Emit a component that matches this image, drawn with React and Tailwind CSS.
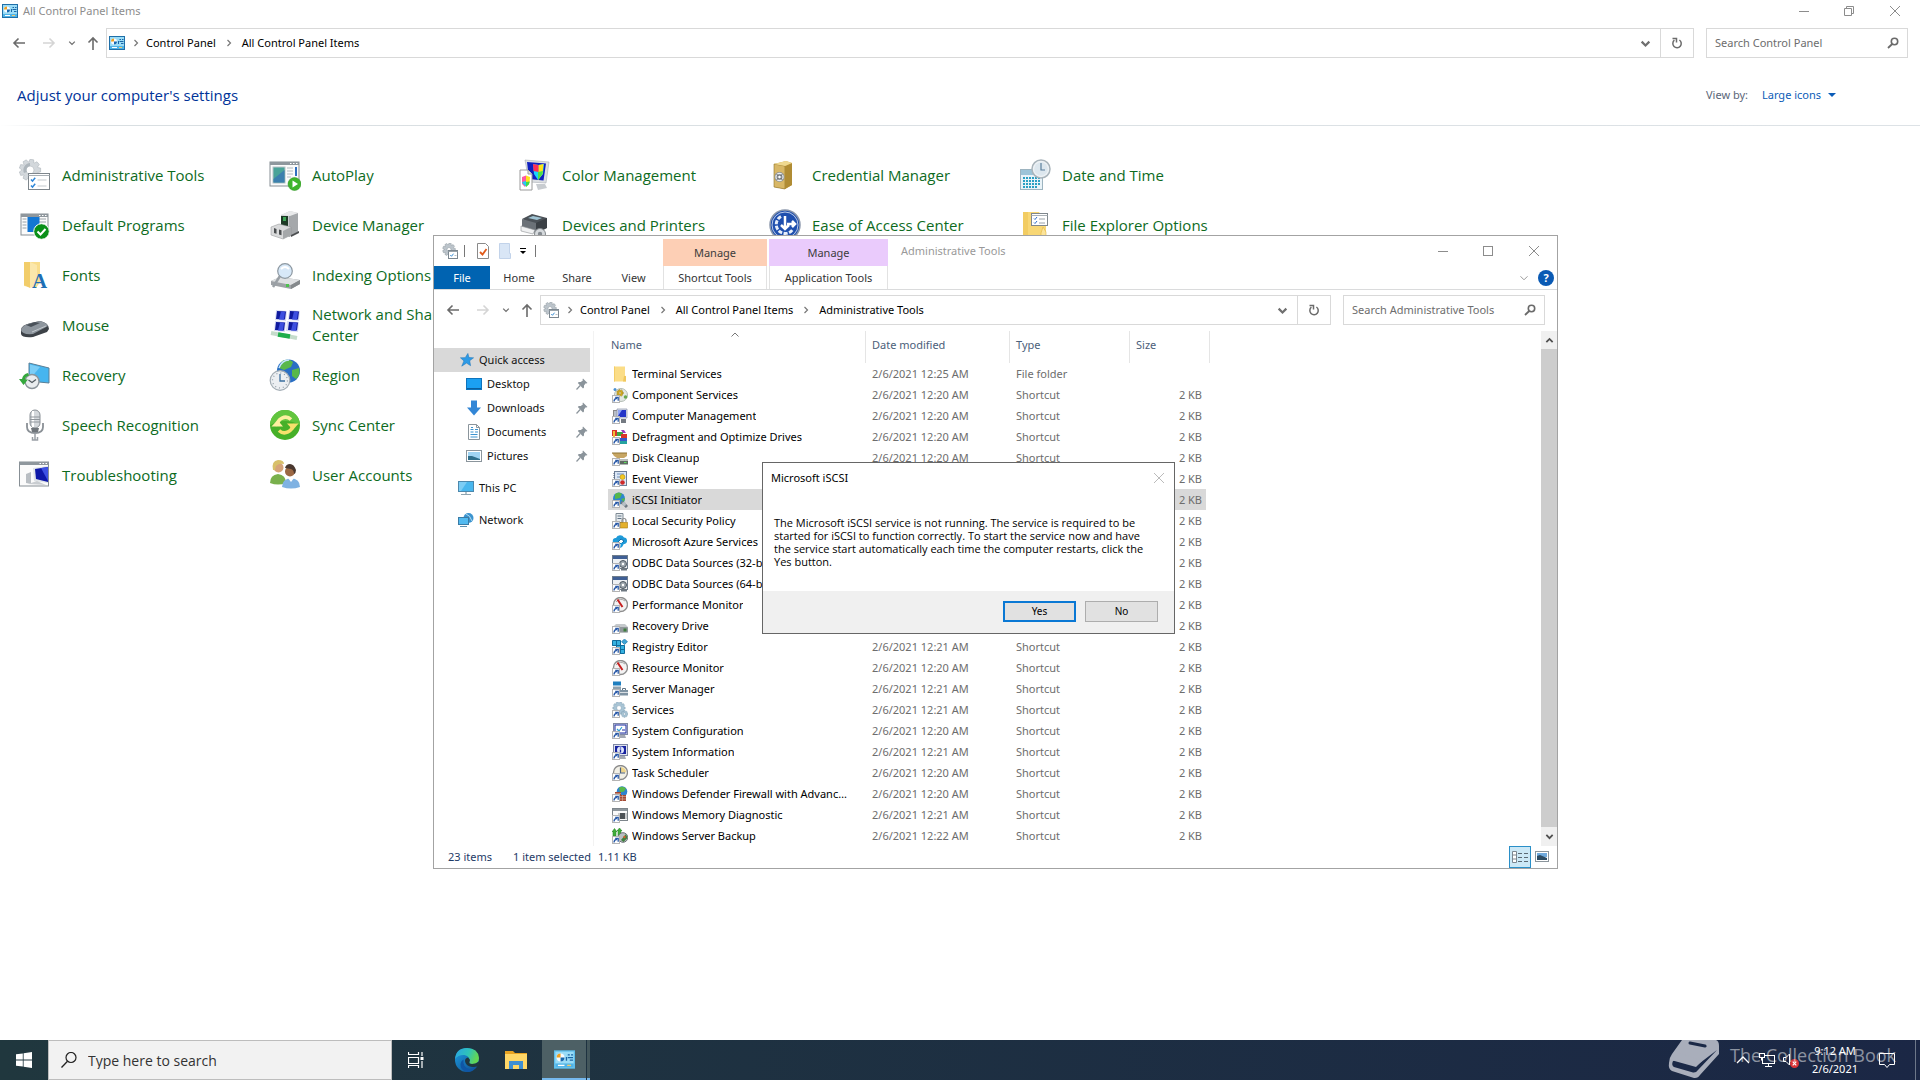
import React from "react";

const P = (props) => <path {...props} />;

/* ---------- shared 16px glyphs ---------- */

function Svg({ s = 16, box = 16, children, label }) {
  return (
    <svg width={s} height={s} viewBox={`0 0 ${box} ${box}`} className="shrink-0" aria-hidden={label ? undefined : true} aria-label={label}>
      {children}
    </svg>
  );
}

function gearPath(cx, cy, r, R, n) {
  const pts = [];
  for (let i = 0; i < n; i++) {
    const a = (i / n) * Math.PI * 2;
    const w = Math.PI / n;
    [[r, -w * 0.95], [R, -w * 0.5], [R, w * 0.5], [r, w * 0.95]].forEach(([q, d]) => {
      pts.push(`${(cx + q * Math.cos(a + d)).toFixed(2)} ${(cy + q * Math.sin(a + d)).toFixed(2)}`);
    });
  }
  return "M" + pts.join("L") + "Z";
}

function Gear({ cx, cy, r, R, n = 8, hole, fill = "#bcc4cb", stroke = "#8e989f" }) {
  return (
    <g>
      <P d={gearPath(cx, cy, r, R, n)} fill={fill} stroke={stroke} strokeWidth="0.5" />
      <circle cx={cx} cy={cy} r={hole} fill="#fff" stroke={stroke} strokeWidth="0.5" />
    </g>
  );
}

function PanelIcon({ s = 16, edge = "#1f6fa8" }) {
  return (
    <Svg s={s}>
      <rect x="0.5" y="1.5" width="15" height="13" fill="#9adcf7" stroke={edge} />
      <rect x="1" y="11" width="14" height="3" fill="#4fb3e6" />
      <circle cx="5" cy="6.5" r="3" fill="#f6fbff" />
      <P d="M5 6.5V3.5A3 3 0 0 0 2 6.5Z" fill="#f0a020" />
      <P d="M5 6.5H8A3 3 0 0 1 5 9.5Z" fill="#1769b0" />
      <P d="M10.500 4.500h1.500M13 4.500h1.500M10.500 6.500h4M12 8.500h2.500M9.500 6v3" stroke="#1a66a6" strokeWidth="1" fill="none" />
      <P d="M3 12.500h5" stroke="#fff" />
      <P d="M10 12.500h3" stroke="#f5c96a" />
    </Svg>
  );
}

function AdminIcon() {
  return (
    <Svg>
      <Gear cx={7} cy={6.5} r={4.6} R={6.4} n={9} hole={2} />
      <rect x="6.500" y="7.500" width="9" height="8" fill="#fff" stroke="#7c8790" />
      <P d="M6.500 8.500h9" stroke="#9aa4ab" />
      <P d="M8.300 12l1.200 1.300 2-2.600" fill="none" stroke="#3a8fd6" />
      <P d="M12.500 12.500h2" stroke="#b9c1c7" />
    </Svg>
  );
}

const Back = ({ c = "#6b6b6b" }) => (
  <Svg><P d="M14 8H3M7.500 3.500L3 8l4.500 4.500" fill="none" stroke={c} strokeWidth="1.6" /></Svg>
);
const Forward = () => (
  <Svg><P d="M2 8h11M8.500 3.500L13 8l-4.500 4.500" fill="none" stroke="#d5d5d5" strokeWidth="1.6" /></Svg>
);
const Up = () => (
  <Svg><P d="M8 15V3M3.500 7.500L8 3l4.500 4.500" fill="none" stroke="#6b6b6b" strokeWidth="1.6" /></Svg>
);
const ChevDown = ({ s = 10, c = "#6f6f6f", w = 1.6 }) => (
  <Svg s={s} box={10}><P d="M1.500 3.300L5 6.800l3.500-3.500" fill="none" stroke={c} strokeWidth={w} /></Svg>
);
const ChevRight = () => (
  <Svg s={8} box={8}><P d="M2.500 1L5.500 4 2.500 7" fill="none" stroke="#777" strokeWidth="1.200" /></Svg>
);
const Refresh = () => (
  <Svg s={12} box={12}>
    <P d="M3.400 3.200A4.200 4.200 0 1 0 8.400 3" fill="none" stroke="#6b6b6b" strokeWidth="1.500" />
    <P d="M1.500 1.500H5.500V5.500" fill="none" stroke="#6b6b6b" strokeWidth="1.500" />
  </Svg>
);
const Magnifier = () => (
  <Svg s={12} box={12}>
    <circle cx="7.500" cy="4.500" r="3.200" fill="none" stroke="#6a6a6a" strokeWidth="1.600" />
    <P d="M5.200 7L1 11" stroke="#6a6a6a" strokeWidth="1.800" />
  </Svg>
);
const MinGlyph = () => (
  <Svg s={10} box={10}><P d="M0 5.500h10" stroke="#8c8c8c" /></Svg>
);
const MaxGlyph = () => (
  <Svg s={10} box={10}><rect x="0.500" y="0.500" width="9" height="9" fill="none" stroke="#8c8c8c" /></Svg>
);
const RestoreGlyph = () => (
  <Svg s={10} box={10}><P d="M0.500 2.500h7v7h-7zM2.500 2.500v-2h7v7h-2" fill="none" stroke="#8c8c8c" /></Svg>
);
const CloseGlyph = ({ c = "#8c8c8c" }) => (
  <Svg s={10} box={10}><P d="M0 0L10 10M10 0L0 10" stroke={c} strokeWidth="1" /></Svg>
);

/* ---------- large control panel icons ---------- */

const L = ({ children }) => <Svg s={32} box={32}>{children}</Svg>;

const WindowFrame = ({ x = 1, y = 3, w = 29, h = 24 }) => (
  <g>
    <rect x={x} y={y} width={w} height={h} fill="#fbfbfb" stroke="#878f95" />
    <rect x={x} y={y} width={w} height="3" fill="#8f979d" />
    <P d={`M${x + w - 9} ${y + 1.5}h1.500m1.500 0h1.500m1.500 0h1.500`} stroke="#fff" />
  </g>
);

const big = {
  admin: (
    <L>
      <Gear cx={11} cy={11} r={8} R={10.8} n={9} hole={4} fill="#d3d8dc" stroke="#a4adb3" />
      <P d="M11 4a7 7 0 0 0-6 10l3-1a4 4 0 0 1 3-6z" fill="#aeb6bc" />
      <rect x="9.500" y="14.500" width="21" height="16" fill="#fff" stroke="#7e868c" />
      <P d="M9.500 16.500h21" stroke="#a9b0b5" />
      <P d="M12 20.500l1.500 1.600 2.700-3.400M12 26.500l1.500 1.600 2.700-3.400" fill="none" stroke="#2f87d8" strokeWidth="1.500" />
      <P d="M18.500 21h9M18.500 27h9" stroke="#c3c9cd" />
    </L>
  ),
  autoplay: (
    <L>
      <WindowFrame x={1} y={3} w={29} h={24} />
      <rect x="4" y="8" width="12" height="16" fill="#4aa398" stroke="#b8c2c8" />
      <P d="M4.500 20l11-9v12.500h-11z" fill="#3c7fae" />
      <P d="M18 9h6M18 12h6M18 15h6M18 18h4" stroke="#b3babf" />
      <rect x="26" y="8" width="2" height="9" fill="#316fc0" />
      <circle cx="25.500" cy="25" r="6.500" fill="#3fb52c" stroke="#2b8f1e" strokeWidth="0.500" />
      <P d="M23.500 21.500l5.500 3.500-5.500 3.500z" fill="#fff" />
    </L>
  ),
  color: (
    <L>
      <P d="M6 1l24 2-3 21-17-1z" fill="#dcdfe2" stroke="#a9afb5" strokeWidth="0.600" />
      <P d="M8 3l19 1.500-2.500 17L10 20z" fill="#0f1fbf" />
      <P d="M14 5l6 1 5-1-1 10-5 6-4-6z" fill="#19d3ff" />
      <P d="M19.500 6l5-1-1 10-4.500 6z" fill="#ffe21a" />
      <P d="M14 5l5.500 1v7l-5-1z" fill="#ff2d55" />
      <P d="M19 13l5-1-.5 3-4.500 6z" fill="#4be04b" />
      <P d="M17 25h9l2 4-9 2z" fill="#c8ccd0" />
      <P d="M1 11h8l4 4v16H1z" fill="#fff" stroke="#9a9a9a" />
      <P d="M9 11v4h4" fill="#e6e6e6" stroke="#9a9a9a" />
      <P d="M3 18l4-1.500v9.500l-1 2-3-3z" fill="#ff5aa0" />
      <P d="M7 16.500l4 1.500-.5 6-3.500 4z" fill="#ffe21a" />
      <P d="M3 23l4-1v5.500l-3-2.500z" fill="#28c8f0" />
      <P d="M7 23l3.800-.5-1 3-2.800 2.500z" fill="#3cdc50" />
    </L>
  ),
  credential: (
    <L>
      <P d="M5 5l12-3 6 2v22l-7 4-11-2z" fill="#caa54a" />
      <P d="M5 5l11 2v23L5 28z" fill="#d8b766" stroke="#8f7226" strokeWidth="0.600" />
      <P d="M16 7l7-3v22l-7 4z" fill="#b08c34" />
      <P d="M5 5l12-3 6 2-7 3z" fill="#efd991" />
      <circle cx="10.500" cy="18" r="5" fill="#8a8f93" />
      <circle cx="10.500" cy="18" r="3.600" fill="none" stroke="#eceff1" strokeWidth="1.200" />
      <P d="M7.500 15l6 6M13.500 15l-6 6" stroke="#54585b" strokeWidth="0.800" />
      <circle cx="10.500" cy="18" r="1.300" fill="#fff" />
    </L>
  ),
  date: (
    <L>
      <rect x="1.500" y="10.500" width="22" height="20" fill="#e9f3f8" stroke="#9db4c0" />
      <rect x="2" y="11" width="21" height="5" fill="#9cc4d8" />
      <P d="M4 19h17M4 22h17M4 25h17M4 28h14" stroke="#2aa0c4" strokeWidth="2" strokeDasharray="2 1" />
      <circle cx="22" cy="10" r="9" fill="#eef2f5" stroke="#a9b4bb" strokeWidth="1.500" />
      <circle cx="22" cy="10" r="6.800" fill="#dde7ee" />
      <P d="M22 4v7h4" fill="none" stroke="#5a7f9c" strokeWidth="1.200" />
    </L>
  ),
  defaults: (
    <L>
      <WindowFrame x={2} y={5} w={27} h={21} />
      <P d="M3.500 10h4M3.500 13h4M3.500 16h4M3.500 19h4M20 10h7M20 13h7" stroke="#9aa2a8" />
      <rect x="8.500" y="8" width="12" height="15" fill="#1477d4" />
      <circle cx="22.500" cy="22.500" r="7.800" fill="#0a8f18" stroke="#fff" />
      <P d="M18.500 22.500l3 3 5-5.500" fill="none" stroke="#fff" strokeWidth="2" />
    </L>
  ),
  device: (
    <L>
      <P d="M12 6l9-4 8 2v19l-9 5-8-3z" fill="#c9cbcd" />
      <P d="M20 6l9-2v19l-9 5z" fill="#a5a8ab" />
      <P d="M12 6l9-4 8 2-8 3z" fill="#e9eaeb" />
      <rect x="12" y="7" width="7" height="10" fill="#1d3a26" />
      <rect x="14" y="8" width="3" height="4" fill="#3fa556" />
      <P d="M2 18l8-3 12 3v8l-8 4-12-4z" fill="#d9dadb" stroke="#8c8f91" strokeWidth="0.500" />
      <P d="M14 22l8-4v8l-8 4z" fill="#a5a8aa" />
      <P d="M5 19v5l2.500.8V20zM10 20.500v5l2.500.8v-5z" fill="#4b4e50" />
      <P d="M22 26l8-4v2l-8 4z" fill="#4b4e50" />
    </L>
  ),
  printer: (
    <L>
      <P d="M3 10l10-5 15 4v3l-11 5z" fill="#4b5157" />
      <P d="M9 9l5-2 9 2-5 2z" fill="#9fc3d3" />
      <P d="M3 10l14 4v10L3 20z" fill="#6b7177" />
      <P d="M17 14l11-5v10l-11 6z" fill="#3b4045" />
      <P d="M2 17l14 4-2 4-12-3z" fill="#f0f1f2" stroke="#8b8f92" strokeWidth="0.600" />
      <circle cx="21" cy="25" r="5.500" fill="#d5d9dc" stroke="#84898d" />
      <circle cx="21" cy="25" r="2.200" fill="#868c91" />
    </L>
  ),
  ease: (
    <L>
      <circle cx="16" cy="16" r="15" fill="#1f4fae" stroke="#8b97ab" strokeWidth="1.500" />
      <circle cx="16" cy="16" r="13" fill="none" stroke="#dfe8f6" strokeWidth="0.800" />
      <P d="M16 7v12M12 16l4 4 4-4M18 15h8M23 12l3 3-3 3" fill="none" stroke="#fff" strokeWidth="2.500" />
      <P d="M12 7.500A9 9 0 1 0 24 20" fill="none" stroke="#e8effa" strokeWidth="3" strokeDasharray="4 1.500" />
    </L>
  ),
  folderopts: (
    <L>
      <P d="M4 3h16l2 3h5v26H4z" fill="#f8d775" />
      <P d="M4 3h5v29H4z" fill="#f2cc62" />
      <P d="M22 24l2-6 3 5v10h-5z" fill="#fce49a" stroke="#e0b544" strokeWidth="0.600" />
      <rect x="12.500" y="4.500" width="16" height="12" fill="#fff" stroke="#7f878d" />
      <P d="M12.500 6.500h16" stroke="#a9b0b5" />
      <P d="M15 9.500l1 1 2-2.500M15 13.500l1 1 2-2.500" fill="none" stroke="#2f6fc8" />
      <P d="M20 10h6M20 14h6" stroke="#9aa2a8" />
    </L>
  ),
  fonts: (
    <L>
      <P d="M5 3h16v20l-4 6-12-2z" fill="#f9dd8c" />
      <P d="M5 3h6v26l-6-3z" fill="#f2cd6a" />
      <P d="M11 3l7 3v20l-7 3z" fill="#fbe7ab" />
      <text x="13" y="29" fontFamily="Liberation Serif, serif" fontSize="21" fontWeight="700" fill="#1f6fb5">A</text>
    </L>
  ),
  indexing: (
    <L>
      <P d="M2 22l9-4 20 3v4l-9 5-20-4z" fill="#9ea2a6" />
      <P d="M2 22l9-4 20 3-9 5z" fill="#dfe1e3" />
      <P d="M22 26l9-5v4l-9 5z" fill="#85898c" />
      <rect x="17" y="25" width="3" height="3" fill="#4ec24e" />
      <P d="M11 17l-7 11" stroke="#9aa0a5" strokeWidth="2.500" />
      <circle cx="16" cy="12" r="7.300" fill="#d7e8f8" stroke="#8d98a1" strokeWidth="1.200" />
      <P d="M12 10q4-4 8 0" fill="none" stroke="#fff" strokeWidth="2" />
    </L>
  ),
  mouse: (
    <L>
      <P d="M2 21q0-5 10-7l9-2q9 2 9 8l-2 3-14 5Q3 29 2 25z" fill="#3d4248" />
      <P d="M2 21q1-5 10-7l9-2q7 2 8 5l-15 8Q3 26 2 21z" fill="#8e969e" />
      <P d="M7 16l9-3 5 1-9 4z" fill="#4b525a" />
      <P d="M13 23l14-6" stroke="#c3c9ce" />
    </L>
  ),
  network: (
    <L>
      <P d="M7 1l11 1-1 10-11-1zM20 1l11 1-1 10-11-1zM6 12l11 1-1 10-11-1zM18 12l12 1-1 10-12-1z" fill="#d8dcf4" />
      <P d="M8 2l9 .5-1 8-9-.5zM21 2l9 .5-1 8-9-.5zM7 13l9 .5-1 8-9-.5zM20 13l9 .5-1 8-9-.5z" fill="#0f1a9e" />
      <P d="M12 2.500l4 .2-1 8-5-.3zM25 2.500l4 .2-1 8-5-.3zM11 13.500l4 .2-1 8-5-.3zM24 13.500l4 .2-1 8-5-.3z" fill="#3d4fe0" />
      <P d="M2 24l26 5" stroke="#c5dccb" strokeWidth="4" />
      <P d="M9 25.500l12 2" stroke="#1fae4b" strokeWidth="4.500" />
    </L>
  ),
  recovery: (
    <L>
      <P d="M10 4l20 5v15l-20-2z" fill="#46b5ef" stroke="#5a7f96" />
      <P d="M11 5.500l10 2.500-10 12z" fill="#7bcdf6" />
      <circle cx="13" cy="22.500" r="7" fill="#e9ecee" stroke="#8b949a" strokeWidth="1.500" />
      <P d="M9.500 21l3.500 2.500 4-3" fill="none" stroke="#50585e" strokeWidth="1.200" />
      <P d="M9 14q-5 1-6 6H0l4.500 6L9 20.500H6q0-3 4-4z" fill="#34a83c" />
    </L>
  ),
  region: (
    <L>
      <circle cx="19.500" cy="12" r="11.500" fill="#2a6fc4" />
      <P d="M13 2q7-3 11 1l-2 5-7 3-5-2zM23 11l7-2q2 7-3 11l-4-3z" fill="#58b84a" />
      <P d="M10 9q3-8 10-8" stroke="#c5e4ff" strokeWidth="1.500" fill="none" />
      <circle cx="11" cy="21.500" r="9.800" fill="#eceff2" stroke="#a3adb4" strokeWidth="1.200" />
      <circle cx="11" cy="21.500" r="7.500" fill="none" stroke="#8b98a2" strokeWidth="1.200" strokeDasharray="1 2.930" />
      <P d="M11 15v7h5" fill="none" stroke="#3a6f9f" strokeWidth="1.300" />
    </L>
  ),
  mic: (
    <L>
      <rect x="11" y="1" width="10" height="18" rx="5" fill="#d4d8dc" stroke="#8a9096" />
      <P d="M14 2v16" stroke="#fff" strokeWidth="2" />
      <P d="M11 8h10M11 10.500h10M11 13h10" stroke="#90969c" />
      <P d="M8 14v4q0 6 8 6t8-6v-4" fill="none" stroke="#8a9096" strokeWidth="1.800" />
      <P d="M16 24v7M13.500 28v3h5v-3" stroke="#9aa0a6" strokeWidth="1.500" fill="none" />
      <P d="M12 19h8l-1 4h-6z" fill="#6f757b" />
    </L>
  ),
  sync: (
    <L>
      <circle cx="16" cy="16" r="15" fill="#46b028" />
      <P d="M1 16a15 15 0 0 1 30 0q-15-8-30 0z" fill="#62c53e" />
      <P d="M8.500 17A8 8 0 0 1 22 10.500" fill="none" stroke="#fdf0a0" strokeWidth="3.500" />
      <P d="M23.500 15A8 8 0 0 1 10 21.500" fill="none" stroke="#f6e06c" strokeWidth="3.500" />
      <P d="M18 14.500h11.500L24 21z" fill="#f6e06c" />
      <P d="M2.500 17.500H14L8.500 11z" fill="#fdf0a0" />
    </L>
  ),
  trouble: (
    <L>
      <WindowFrame x={0.5} y={3} w={29} h={24} />
      <P d="M7 15l5-2v12l-5-1z" fill="#b9bec3" />
      <P d="M14 9l15-2v17l-14-2z" fill="#dfe3e8" />
      <P d="M16 10l13-2v15l-12-3z" fill="#0e18a8" />
      <P d="M22 9l7-1v14z" fill="#3e52e4" />
      <P d="M9 25l9-3 9 4z" fill="#c9cdd1" />
    </L>
  ),
  users: (
    <L>
      <P d="M1 24q0-8 8-9 8 1 8 9-8 3-16 0z" fill="#79b04c" />
      <circle cx="9.500" cy="8.500" r="5" fill="#d6a379" />
      <P d="M4 11Q2 2 9 1q6 0 6 4-5-1-8 2l-1 4z" fill="#d8c06a" />
      <P d="M13 28q0-8 9-9 9 1 9 9-9 3-18 0z" fill="#7fb2e2" />
      <P d="M19 19l3 4 3-4z" fill="#fff" />
      <circle cx="21" cy="12.500" r="5" fill="#9c6844" />
      <P d="M16 9q1-4 5-4t6 6q0 3-2 4 0-4-3-5z" fill="#4a382f" />
    </L>
  ),
};

/* ---------- small shortcut icons ---------- */

const Cut = ({ children }) => (
  <Svg>
    {children}
    <rect x="0.500" y="8.500" width="7" height="7" fill="#fff" stroke="#b4b4b4" />
    <P d="M2 14.500q0-3 3-3.200M3.200 10.500h3v3.200" fill="none" stroke="#2a5aa8" strokeWidth="1.300" />
  </Svg>
);

const Monitor = ({ fill = "#1723a0" }) => (
  <g>
    <rect x="1.500" y="0.500" width="14" height="11" fill="#dfe3ee" stroke="#7f88a6" />
    <rect x="3" y="2" width="11" height="8" fill={fill} />
    <P d="M8 12h5l1 3H8z" fill="#a3a9b3" />
  </g>
);
const Dial = () => (
  <g>
    <circle cx="8.500" cy="7.500" r="7" fill="#f3f3f3" stroke="#8f8f8f" strokeWidth="1.400" />
    <P d="M4 5a6 6 0 0 1 9-1" stroke="#a8a8a8" fill="none" />
    <P d="M5.500 2.500l5 7.500" stroke="#c62020" strokeWidth="2" />
  </g>
);
const Odbc = () => (
  <g>
    <rect x="0.500" y="0.500" width="15" height="13" fill="#eef1f4" stroke="#6f7d8c" />
    <rect x="1" y="1" width="14" height="3" fill="#3f5f95" />
    <circle cx="11" cy="9" r="3.500" fill="#9aa4ac" stroke="#4c5660" />
    <circle cx="11" cy="9" r="1.200" fill="#fff" />
    <P d="M9 13h6v2.500H9z" fill="#6d7780" />
  </g>
);

const small = {
  folder: (
    <Svg>
      <P d="M2 0.500h11v9l1 1v5H2z" fill="#fbdd87" />
      <P d="M12 10h2v5.500h-3z" fill="#f0c75e" />
      <P d="M2 0.500h1v15H2z" fill="#f3cd68" />
    </Svg>
  ),
  component: (
    <Cut>
      <circle cx="9" cy="8" r="6.500" fill="#e3e8e4" stroke="#b4bdb6" />
      <Gear cx={8} cy={6} r={2.2} R={3.4} n={7} hole={1} fill="#d9b020" stroke="#8f7310" />
      <circle cx="3" cy="2.500" r="1.500" fill="#4a8fd0" />
      <circle cx="13.500" cy="10" r="1.800" fill="#6aa84f" />
    </Cut>
  ),
  computer: (
    <Cut>
      <rect x="1.500" y="2.500" width="6" height="8" fill="#b8bec8" stroke="#888" />
      <P d="M5 1h10v9H5z" fill="#dfe3ee" stroke="#8790a8" strokeWidth="0.700" />
      <P d="M6 2h8v7H6z" fill="#2436c8" />
      <P d="M6 2h4l-4 6z" fill="#8fa4f4" />
      <rect x="9" y="11" width="5" height="4" fill="#747a82" />
    </Cut>
  ),
  defrag: (
    <Cut>
      <rect x="0" y="1" width="5" height="6" fill="#d8352a" />
      <rect x="1" y="2" width="2" height="6" fill="#efc03a" />
      <rect x="5" y="3" width="6" height="4" fill="#3aa845" />
      <P d="M9 1h3l2 3h-3z" fill="#9a3bc0" />
      <rect x="9" y="5" width="6" height="4" fill="#d8352a" />
      <rect x="8" y="9" width="7" height="3" fill="#3558c8" />
      <rect x="8" y="12" width="7" height="3" fill="#26a3a0" />
    </Cut>
  ),
  cleanup: (
    <Cut>
      <P d="M0 3h15v3l-3 2H5L2 6z" fill="#c7a663" />
      <P d="M0 3h15" stroke="#8f7436" />
      <rect x="6" y="9" width="10" height="5.500" fill="#5f6a62" />
      <rect x="6" y="9" width="10" height="2" fill="#b9beb9" />
      <rect x="12" y="12" width="2.500" height="1" fill="#5ee05e" />
    </Cut>
  ),
  event: (
    <Cut>
      <rect x="2.500" y="0.500" width="12" height="14" fill="#dce8f6" stroke="#6d7f98" />
      <P d="M5 3h7M5 6h3" stroke="#6f8fc0" />
      <circle cx="10.500" cy="6" r="2.500" fill="#f4c820" stroke="#a88508" strokeWidth="0.500" />
      <circle cx="10.500" cy="11.500" r="2.300" fill="#cf2a2a" />
      <P d="M2 2v12" stroke="#50607a" strokeDasharray="1 1" />
    </Cut>
  ),
  iscsi: (
    <Cut>
      <circle cx="7" cy="6.500" r="6" fill="#2d86cf" />
      <P d="M3 2q4-3 7 0l-2 4-5 1zM9 7l4-1-1 4z" fill="#56b64a" />
      <P d="M9 10l3 2 3 3" stroke="#6f7982" strokeWidth="3" fill="none" />
      <circle cx="12" cy="12" r="2" fill="#b8c0c6" />
    </Cut>
  ),
  security: (
    <Cut>
      <P d="M4 0.500h7v9H4z" fill="#e7ebee" stroke="#7f8b95" />
      <P d="M5.500 3h4M5.500 5.500h4" stroke="#5f7487" />
      <P d="M10 9.500V7.500a2 2 0 0 1 4 0v2" fill="none" stroke="#8a8a8a" strokeWidth="1.200" />
      <rect x="8.500" y="9.500" width="7" height="5.500" fill="#e3b02c" stroke="#a87d10" strokeWidth="0.600" />
    </Cut>
  ),
  azure: (
    <Cut>
      <P d="M3.500 10a3 3 0 0 1 .5-6 4.500 4.500 0 0 1 8-.5A3.300 3.300 0 0 1 12.500 10z" fill="#1e9ad8" />
      <P d="M6 8l3-3 3 2-3 3z" fill="#fff" stroke="#0d6fae" />
      <P d="M9 9l4-1-3 5-2 1z" fill="#1e9ad8" />
    </Cut>
  ),
  odbc: <Cut><Odbc /></Cut>,
  dial: <Cut><Dial /></Cut>,
  drive: (
    <Cut>
      <P d="M2 8l2-2h9l3 3v5.500H4z" fill="#c5c9cc" />
      <rect x="4" y="9" width="12" height="5.500" rx="1" fill="#92989c" />
      <rect x="11.500" y="10.500" width="3" height="3" fill="#3d7d3d" />
    </Cut>
  ),
  registry: (
    <Cut>
      <P d="M0.500 1.500h8v5h4v8h-8v-8h-4z" fill="#35b1e0" stroke="#0f6c9c" />
      <P d="M4.500 1.500v13M0.500 6.500h12M8.500 6v9M4.500 10.500h8" stroke="#0f6c9c" />
      <P d="M12.500 0l3 2.700-3 2.800-3-2.800z" fill="#3fa4d6" stroke="#0f6c9c" strokeWidth="0.600" />
    </Cut>
  ),
  server: (
    <Cut>
      <rect x="1" y="0.500" width="8" height="4" fill="#1f7fbf" />
      <rect x="1" y="5.500" width="8" height="4" fill="#8fa1ae" />
      <rect x="8" y="9" width="8" height="5.500" fill="#7f93a3" />
      <P d="M10.500 9V7.500h3V9" stroke="#5e7282" fill="none" />
      <P d="M8 11.500h8" stroke="#fff" strokeWidth="0.700" />
    </Cut>
  ),
  services: (
    <Cut>
      <Gear cx={7} cy={6} r={4.6} R={6.2} n={10} hole={2.4} fill="#a9c5d6" stroke="#7f9eb2" />
      <Gear cx={12.5} cy={12} r={2.4} R={3.4} n={8} hole={1.1} fill="#a9c5d6" stroke="#7f9eb2" />
    </Cut>
  ),
  sysconf: (
    <Cut>
      <Monitor fill="#fff" />
      <rect x="3" y="2" width="11" height="8" fill="none" stroke="#1a2aa0" />
      <P d="M5 6l2 2 3-4" stroke="#2f9fd8" fill="none" strokeWidth="1.200" />
      <P d="M10 7h3" stroke="#1a2aa0" />
    </Cut>
  ),
  sysinfo: (
    <Cut>
      <Monitor />
      <circle cx="8.500" cy="6" r="3.500" fill="#dfe6fb" />
      <P d="M8.500 5.500v3M8.500 3.600v1" stroke="#1723a0" strokeWidth="1.300" />
    </Cut>
  ),
  task: (
    <Cut>
      <circle cx="8.500" cy="7.500" r="7" fill="#f2f0e6" stroke="#8b8b8b" strokeWidth="1.300" />
      <P d="M8.500 7.500V2A5.500 5.500 0 0 1 14 7.500z" fill="#efd58a" />
      <P d="M8.500 2.500v5.500h4.500" fill="none" stroke="#4c6280" strokeWidth="1.200" />
    </Cut>
  ),
  firewall: (
    <Cut>
      <circle cx="10" cy="5.500" r="5.300" fill="#2f82cf" />
      <P d="M7 1.500q4-2 7 1l-2 3-4 1z" fill="#58b84a" />
      <P d="M3 6h6v3h5v6H7V9H3z" fill="#a44a34" />
      <P d="M3 7.500h6M8 10.500h6M8 13h6M10.500 9v6" stroke="#e5c3b4" strokeWidth="0.500" />
    </Cut>
  ),
  memory: (
    <Cut>
      <rect x="0.500" y="1.500" width="15" height="12" fill="#fafafa" stroke="#7d858b" />
      <rect x="1" y="2" width="14" height="2" fill="#8f979d" />
      <rect x="8" y="6" width="5" height="6" fill="#3d4145" />
      <P d="M6 7h9M6 9h9M6 11h9" stroke="#6d7276" strokeWidth="0.700" />
    </Cut>
  ),
  backup: (
    <Cut>
      <P d="M1 8V3L0 4l2.500-3.500L5 4 4 3v5zM6 9V2L5 3l2.500-3L10 3 9 2v7z" fill="#3fae3a" stroke="#2c8a28" strokeWidth="0.600" />
      <circle cx="11" cy="9.500" r="4.800" fill="#b9bec2" stroke="#6d7276" />
      <P d="M9 12l5-6 1.500 4-4 4z" fill="#3f7f3f" />
      <circle cx="12.500" cy="9" r="1.200" fill="#d05f2a" />
    </Cut>
  ),
};

const nav = {
  star: (
    <Svg s={14}><P d="M9 0.500l1.200 4.700 5.300.3-4.400 3.300 1 5.700-4.600-3-5.500 3.500 2.500-6L.5 5.500l5.500-.2z" fill="#2e9be6" stroke="#1b73b8" strokeWidth="0.600" /></Svg>
  ),
  desktop: (
    <Svg><rect x="0.500" y="2.500" width="15" height="11" fill="#1ba0f2" stroke="#0e74bd" /><P d="M1 12.500h14" stroke="#0b5f9e" /></Svg>
  ),
  down: (
    <Svg><P d="M5 0.500h6v7h4l-7 8-7-8h4z" fill="#3286d6" /></Svg>
  ),
  docs: (
    <Svg>
      <P d="M2.500 0.500h8l3 3v12h-11z" fill="#fff" stroke="#8b959c" />
      <P d="M10.500 0.500v3h3" fill="none" stroke="#8b959c" />
      <P d="M4.500 5.500h3M9 5.500h3M4.500 8h3M9 8h3M4.500 10.500h7M4.500 13h7M7 3.500H5" stroke="#3d93cf" />
    </Svg>
  ),
  pics: (
    <Svg>
      <rect x="0.500" y="2.500" width="15" height="11" fill="#fff" stroke="#8b959c" />
      <rect x="2" y="4" width="12" height="8" fill="#9fd4f3" />
      <P d="M2 8l4 0 8 3v1H2z" fill="#2e6f8c" />
    </Svg>
  ),
  pc: (
    <Svg>
      <rect x="0.500" y="1.500" width="15" height="10" fill="#49b7ee" stroke="#4c88ad" />
      <P d="M1 2h8l-6 9H1z" fill="#7ccdf5" />
      <P d="M3 14.500h10" stroke="#8fa4b0" />
      <P d="M7 12h2v2H7z" fill="#b5c3cb" />
    </Svg>
  ),
  net: (
    <Svg>
      <circle cx="10.500" cy="6" r="5" fill="#3b94cf" />
      <P d="M8 2q4 1 6 7" stroke="#b4dcf2" fill="none" />
      <rect x="0.500" y="5.500" width="10" height="7" fill="#52baf0" stroke="#3b7ca6" />
      <P d="M2 14.500h7" stroke="#5b8fb0" />
    </Svg>
  ),
};

const Pin = () => (
  <Svg s={12} box={12}>
    <P d="M7 0.500l4.500 4.500-1.200.6-.6-.3L8 7.500v2L7 10.400 1.800 5l1-1h2L7 2.300 6.500 1.500z" fill="#8b949b" />
    <P d="M4.200 7.500L0.500 11.500" stroke="#8b949b" strokeWidth="1.200" />
  </Svg>
);

/* ---------- shared window parts ---------- */

function AddressBar({ icon, crumbs, placeholder }) {
  return (
    <div className="flex h-[30px] items-stretch pr-3 text-black">
      <div className="flex items-center pl-1">
        <button aria-label="Back" className="flex w-[30px] justify-center"><Back /></button>
        <button aria-label="Forward" className="flex w-[30px] justify-center"><Forward /></button>
        <button aria-label="Recent locations" className="flex w-4 justify-center"><ChevDown s={8} /></button>
        <button aria-label="Up" className="flex w-[26px] justify-center"><Up /></button>
      </div>
      <div className="flex flex-1 items-stretch border border-[#d9d9d9] bg-white">
        <div className="flex flex-1 items-center pl-0.5">
          {icon}
          {crumbs.map((c, i) => (
            <React.Fragment key={c}>
              <span className={(i === 0 ? "w-[21px]" : "w-[26px]") + " flex justify-center"}><ChevRight /></span>
              <button className="whitespace-nowrap">{c}</button>
            </React.Fragment>
          ))}
        </div>
        <button aria-label="Previous locations" className="flex w-[30px] items-center justify-center"><ChevDown s={11} w={2} /></button>
        <button aria-label="Refresh" className="flex w-[33px] items-center justify-center border-l border-[#d9d9d9]"><Refresh /></button>
      </div>
      <label className="ml-3 flex w-[202px] items-center border border-[#d9d9d9] bg-white pr-2 pl-2">
        <input type="text" aria-label={placeholder} placeholder={placeholder} className="min-w-0 flex-1 bg-transparent outline-none placeholder:text-[#6d6d6d]" />
        <Magnifier />
      </label>
    </div>
  );
}

function Caption({ restore }) {
  return (
    <div className="flex items-center">
      <button aria-label="Minimize" className="flex h-5 w-[45px] items-center justify-center"><MinGlyph /></button>
      <button aria-label={restore ? "Restore" : "Maximize"} className="flex h-5 w-[45px] items-center justify-center">
        {restore ? <RestoreGlyph /> : <MaxGlyph />}
      </button>
      <button aria-label="Close" className="flex h-5 w-[47px] items-center justify-center"><CloseGlyph /></button>
    </div>
  );
}

/* ---------- control panel window ---------- */

const panelRows = [
  [["Administrative Tools", "admin"], ["AutoPlay", "autoplay"], ["Color Management", "color"], ["Credential Manager", "credential"], ["Date and Time", "date"]],
  [["Default Programs", "defaults"], ["Device Manager", "device"], ["Devices and Printers", "printer"], ["Ease of Access Center", "ease"], ["File Explorer Options", "folderopts"]],
  [["Fonts", "fonts"], ["Indexing Options", "indexing"]],
  [["Mouse", "mouse"], ["Network and Sharing Center", "network"]],
  [["Recovery", "recovery"], ["Region", "region"]],
  [["Speech Recognition", "mic"], ["Sync Center", "sync"]],
  [["Troubleshooting", "trouble"], ["User Accounts", "users"]],
];

function ControlPanel() {
  return (
    <main className="flex flex-1 flex-col bg-white">
      <div className="flex h-[22px] items-center justify-between pr-0.5 pl-0.5 text-[#8d8d8d]">
        <div className="flex items-center gap-[5px]"><PanelIcon /><span>All Control Panel Items</span></div>
        <Caption restore />
      </div>
      <div className="pt-1.5">
        <AddressBar icon={<PanelIcon />} crumbs={["Control Panel", "All Control Panel Items"]} placeholder="Search Control Panel" />
      </div>
      <div className="flex items-center justify-between pt-[25px] pr-[84px] pb-[18px] pl-[17px]">
        <h1 className="font-['Open_Sans',sans-serif] text-[15px] leading-6 text-[#003399]">Adjust your computer's settings</h1>
        <div className="flex items-center gap-[14px]">
          <label htmlFor="view-by" className="text-[#5a6678]">View by:</label>
          <div className="flex items-center gap-1.5 text-[#0b5cb8]">
            <select id="view-by" className="cursor-pointer appearance-none bg-transparent outline-none" defaultValue="Large icons">
              <option>Large icons</option>
            </select>
            <Svg s={8} box={8}><P d="M0 2h8L4 6z" fill="#0b5cb8" /></Svg>
          </div>
        </div>
      </div>
      <div className="h-px bg-linear-to-r from-white via-[#d9dfe2] via-5% to-[#dde2e6]" />
      <div className="flex flex-col pt-6 pl-[19px]">
        {panelRows.map((row) => (
          <div key={row[0][0]} className="flex">
            {row.map(([name, icon]) => (
              <a key={name} href="#" className="flex h-[50px] w-[250px] items-center gap-[11px] font-['Open_Sans',sans-serif] text-[15px] leading-[21px] text-[#0e6b1e]">
                {big[icon]}
                <span className="max-w-[170px]">{name}</span>
              </a>
            ))}
          </div>
        ))}
      </div>
    </main>
  );
}

/* ---------- administrative tools window ---------- */

const files = [
  ["Terminal Services", "folder", "25"],
  ["Component Services", "component", "20"],
  ["Computer Management", "computer", "20"],
  ["Defragment and Optimize Drives", "defrag", "20"],
  ["Disk Cleanup", "cleanup", "20"],
  ["Event Viewer", "event", "20"],
  ["iSCSI Initiator", "iscsi", "20"],
  ["Local Security Policy", "security", "20"],
  ["Microsoft Azure Services", "azure", "21"],
  ["ODBC Data Sources (32-bit)", "odbc", "20"],
  ["ODBC Data Sources (64-bit)", "odbc", "20"],
  ["Performance Monitor", "dial", "20"],
  ["Recovery Drive", "drive", "20"],
  ["Registry Editor", "registry", "21"],
  ["Resource Monitor", "dial", "20"],
  ["Server Manager", "server", "21"],
  ["Services", "services", "21"],
  ["System Configuration", "sysconf", "20"],
  ["System Information", "sysinfo", "21"],
  ["Task Scheduler", "task", "20"],
  ["Windows Defender Firewall with Advanced Security", "firewall", "20"],
  ["Windows Memory Diagnostic", "memory", "21"],
  ["Windows Server Backup", "backup", "22"],
];

function FileTable() {
  const th = "h-8 border-r border-[#e5e5e5] pt-0 pb-[5px] text-left font-normal text-[#4c607a]";
  return (
    <table className="w-[602px] table-fixed border-separate border-spacing-0 self-start">
      <colgroup>
        <col className="w-[258px]" /><col className="w-[144px]" /><col className="w-[120px]" /><col className="w-[80px]" />
      </colgroup>
      <thead>
        <tr>
          <th className={th + " relative pl-[3px]"}>
            Name
            <span className="absolute top-0 left-[123px]"><Svg s={8} box={8}><P d="M0.500 5.500L4 2l3.500 3.500" fill="none" stroke="#777" /></Svg></span>
          </th>
          <th className={th + " pl-1.5"}>Date modified</th>
          <th className={th + " pl-1.5"}>Type</th>
          <th className={th + " pl-1.5"}>Size</th>
        </tr>
      </thead>
      <tbody>
        {files.map(([name, icon, min], i) => {
          const bg = name === "iSCSI Initiator" ? "bg-[#d9d9d9]" : "bg-white";
          return (
            <tr key={name} className="text-[#6d6d6d]">
              <td className={"h-[21px] p-0 " + bg}>
                <div className="flex items-center gap-1 pr-4 pl-1 text-black">{small[icon]}<span className="truncate">{name}</span></div>
              </td>
              <td className={"h-[21px] p-0 pl-1.5 whitespace-nowrap " + bg}>2/6/2021 12:{min} AM</td>
              <td className={"h-[21px] p-0 pl-1.5 " + bg}>{i === 0 ? "File folder" : "Shortcut"}</td>
              <td className={"h-[21px] border-r-4 border-white p-0 pr-1 text-right " + bg}>{i === 0 ? "" : "2 KB"}</td>
            </tr>
          );
        })}
      </tbody>
    </table>
  );
}

function NavChild({ icon, name }) {
  return (
    <a href="#" className="flex h-6 items-center gap-[5px] pr-0.5 pl-8">
      {icon}<span className="flex-1">{name}</span><Pin />
    </a>
  );
}

function AdminWindow() {
  const tab = "flex h-[23px] items-center justify-center text-[#333]";
  return (
    <section aria-label="Administrative Tools" className="absolute top-[235px] left-[433px] flex w-[1125px] flex-col border border-[#a3a3a3] bg-white">
      <div className="flex">
        <div className="flex flex-col">
          <div className="flex h-[30px] items-center pl-2">
            <AdminIcon />
            <span className="ml-1.5 h-3 w-px bg-[#777]" />
            <button aria-label="Properties" className="ml-2.5 flex">
              <Svg>
                <P d="M2.500 0.500h8l3 3v12h-11z" fill="#fff" stroke="#8a8a8a" />
                <P d="M5 9l2.500 2.500L11.500 6" fill="none" stroke="#e05a1a" strokeWidth="1.800" />
              </Svg>
            </button>
            <button aria-label="New folder" className="ml-1.5 flex">
              <Svg><P d="M2.500 0.500h10v10h1v5h-11z" fill="#d9e6f6" stroke="#c2d3ea" /></Svg>
            </button>
            <button aria-label="Customize toolbar" className="ml-1.5 flex">
              <Svg s={8} box={8}><P d="M1 1.500h6" stroke="#000" /><P d="M1 4h6L4 7z" fill="#000" /></Svg>
            </button>
            <span className="ml-2 h-3 w-px bg-[#777]" />
          </div>
          <div className="flex">
            <button className="flex h-[23px] w-[56px] items-center justify-center bg-[#0063b1] text-white">File</button>
            <button className={tab + " w-[58px]"}>Home</button>
            <button className={tab + " w-[58px]"}>Share</button>
            <button className={tab + " w-[57px] pr-0.5"}>View</button>
          </div>
        </div>
        <div className="flex gap-0.5 pt-[3px]">
          <div>
            <div className="flex h-[27px] w-[104px] items-center justify-center bg-[#fdcfb5] text-[#3c3c3c]">Manage</div>
            <button className={tab + " w-[104px] border-x border-[#e2e2e2]"}>Shortcut Tools</button>
          </div>
          <div>
            <div className="flex h-[27px] w-[119px] items-center justify-center bg-[#eacbfc] text-[#3c3c3c]">Manage</div>
            <button className={tab + " w-[119px] border-x border-[#e2e2e2]"}>Application Tools</button>
          </div>
        </div>
        <div className="flex flex-1 flex-col">
          <div className="flex h-[30px] items-center justify-between pl-[13px] text-[#999]">
            <span>Administrative Tools</span>
            <Caption />
          </div>
          <div className="flex h-[23px] items-center justify-end gap-[9px] pr-[3px]">
            <button aria-label="Expand the ribbon" className="flex"><ChevDown c="#999" w={1} /></button>
            <button aria-label="Help" className="flex size-4 items-center justify-center rounded-full bg-[#0a5ab4] text-[11px] leading-4 font-bold text-white">?</button>
          </div>
        </div>
      </div>
      <div className="border-t border-[#dadbdc] pt-[5px] pb-1.5">
        <AddressBar icon={<AdminIcon />} crumbs={["Control Panel", "All Control Panel Items", "Administrative Tools"]} placeholder="Search Administrative Tools" />
      </div>
      <div className="flex">
        <nav className="w-[160px] border-r border-[#f2f2f2] pt-[17px] text-[#111]">
          <div className="w-[156px]">
            <a href="#" className="flex h-6 items-center gap-[5px] bg-[#d9d9d9] pl-[26px]">{nav.star}<span>Quick access</span></a>
            <NavChild icon={nav.desktop} name="Desktop" />
            <NavChild icon={nav.down} name="Downloads" />
            <NavChild icon={nav.docs} name="Documents" />
            <NavChild icon={nav.pics} name="Pictures" />
            <a href="#" className="mt-2 flex h-6 items-center gap-[5px] pl-6">{nav.pc}<span>This PC</span></a>
            <a href="#" className="mt-2 flex h-6 items-center gap-[5px] pl-6">{nav.net}<span>Network</span></a>
          </div>
        </nav>
        <div className="flex flex-1 justify-between pl-3.5">
          <FileTable />
          <div className="flex w-4 flex-col bg-[#f0f0f0]">
            <button aria-label="Scroll up" className="flex h-[18px] items-center justify-center">
              <Svg s={9} box={10}><P d="M1.500 6.800L5 3.300l3.500 3.500" fill="none" stroke="#505050" strokeWidth="2" /></Svg>
            </button>
            <div className="flex-1 bg-[#cdcdcd]" />
            <button aria-label="Scroll down" className="flex h-[19px] items-center justify-center"><ChevDown s={9} c="#505050" w={2} /></button>
          </div>
        </div>
      </div>
      <div className="flex h-[22px] items-center pr-[7px] pl-3.5 text-[#1e3a66]">
        <span className="w-[65px]">23 items</span>
        <span className="w-[85px]">1 item selected</span>
        <span className="flex-1">1.11 KB</span>
        <button aria-label="Details view" className="flex h-[22px] w-[22px] items-center justify-center border border-[#2a8fc8] bg-[#cce8f6]">
          <Svg>
            <P d="M0.500 2.500h4v11h-4zM0.500 6h4M0.500 10h4" fill="#fff" stroke="#7c8790" />
            <P d="M6 4.500h10M6 8.500h10M6 12.500h10" stroke="#5c6a74" strokeDasharray="4 2" />
          </Svg>
        </button>
        <button aria-label="Thumbnail view" className="ml-[3px] flex">
          <Svg><rect x="1.500" y="2.500" width="13" height="10" fill="#fff" stroke="#8b959c" /><rect x="3" y="4" width="10" height="4" fill="#6fa9dc" /><P d="M3 7l3-1 7 3v2H3z" fill="#2c4b62" /></Svg>
        </button>
      </div>
    </section>
  );
}

function IscsiDialog() {
  return (
    <div role="dialog" aria-label="Microsoft iSCSI" className="absolute top-[462px] left-[762px] w-[413px] border border-[#666] bg-white text-black">
      <div className="flex h-[30px] items-center justify-between pr-2.5 pl-2">
        <span>Microsoft iSCSI</span>
        <button aria-label="Close dialog" className="flex"><CloseGlyph c="#bbb" /></button>
      </div>
      <p className="pt-[23px] pb-[23px] pl-[11px] font-['Open_Sans',sans-serif] leading-[13px] whitespace-nowrap">
        The Microsoft iSCSI service is not running. The service is required to be<br />
        started for iSCSI to function correctly. To start the service now and have<br />
        the service start automatically each time the computer restarts, click the<br />
        Yes button.
      </p>
      <div className="flex h-[42px] items-center justify-end gap-[9px] bg-[#f0f0f0] pr-4 pb-0.5 text-[10px]">
        <button className="flex h-[21px] w-[73px] items-center justify-center border-2 border-[#0a78d4] bg-[#e1e1e1]">Yes</button>
        <button className="flex h-[21px] w-[73px] items-center justify-center border border-[#adadad] bg-[#e1e1e1]">No</button>
      </div>
    </div>
  );
}

/* ---------- taskbar ---------- */

function Taskbar() {
  return (
    <footer className="relative flex h-10 items-stretch bg-linear-to-r from-[#20373e] to-[#1b2745] text-white">
      <button aria-label="Start" className="flex w-12 items-center justify-center">
        <Svg><P d="M0 2.300L6.800 1.400V7.600H0zM7.600 1.300L16 0V7.600H7.600zM0 8.400H6.800V14.600L0 13.700zM7.600 8.400H16V16L7.600 14.700z" fill="#fff" /></Svg>
      </button>
      <label className="flex w-[344px] items-center gap-[11px] border border-[#bdbdbd] bg-[#f2f2f2] pl-3">
        <Svg><circle cx="10" cy="5.500" r="5" fill="none" stroke="#222" strokeWidth="1.200" /><P d="M6.500 9.200L0.500 15.500" stroke="#222" strokeWidth="1.300" /></Svg>
        <input type="text" aria-label="Type here to search" placeholder="Type here to search" className="min-w-0 flex-1 bg-transparent pt-0.5 font-['Open_Sans',sans-serif] text-[14px] outline-none placeholder:text-[#333]" />
      </label>
      <button aria-label="Task View" className="flex w-12 items-center justify-center">
        <Svg><P d="M0.500 0v2.500h10V0M0.500 5.500h10v6h-10zM0.500 16v-2.500h10V16M14 0v4M14 9v7" fill="none" stroke="#fff" strokeWidth="1.200" /><rect x="12.500" y="5" width="3" height="3" fill="#fff" /></Svg>
      </button>
      <button aria-label="Microsoft Edge" className="flex w-[54px] items-center justify-center">
        <Svg s={24} box={24}>
          <defs>
            <linearGradient id="edgeA" x1="0" y1="0" x2="1" y2="0.300"><stop offset="0" stopColor="#29a3e8" /><stop offset="0.600" stopColor="#2fc3b8" /><stop offset="1" stopColor="#63d653" /></linearGradient>
            <linearGradient id="edgeB" x1="0" y1="0" x2="1" y2="1"><stop offset="0" stopColor="#1b9de2" /><stop offset="1" stopColor="#114a8b" /></linearGradient>
          </defs>
          <circle cx="12" cy="12" r="12" fill="url(#edgeB)" />
          <P d="M0 11Q1 0 12 0T24 10Q24 16 17 16 13.500 16 14.500 13.500 15.500 8.500 9.500 7 3.500 6.500 0 11z" fill="url(#edgeA)" />
          <P d="M10 13q0-3 3-3.500 2.500 2 1.500 4-1 2.500 2.500 2.500 3.500 0 7-2.500v4Q21 19.500 17 19 10.500 18 10 13z" fill="#20373f" />
          <P d="M8.500 11.500q-1 8 6 9.500 4 .5 7-3Q18 24 12 24 5 22 5.500 16q.5-3.500 3-4.500z" fill="#0f56a5" />
        </Svg>
      </button>
      <button aria-label="File Explorer" className="flex w-11 items-center justify-center">
        <Svg s={22} box={22}>
          <P d="M0 2h8l2 2h12v16H0z" fill="#e8a322" />
          <P d="M0 5h22v15H0z" fill="#ffd767" />
          <P d="M4 20v-8h14v8h-4v-4H8v4z" fill="#3f8fd2" />
        </Svg>
      </button>
      <button aria-label="Control Panel" className="ml-1 flex w-11 items-center justify-center border-b-2 border-[#76b9ed] bg-[#4d6065]"><PanelIcon s={21} edge="#5cbdec" /></button>
      <span className="ml-px w-[3px] border-b-2 border-[#76b9ed] bg-[#43565b]" />
      <div className="ml-auto flex items-center">
        <button aria-label="Show hidden icons" className="flex w-6 justify-center">
          <Svg s={14} box={14}><P d="M1 10l6-6 6 6" fill="none" stroke="#fff" strokeWidth="1.300" /></Svg>
        </button>
        <button aria-label="Network" className="flex w-6 justify-center">
          <Svg><rect x="3.500" y="3.500" width="12" height="8" fill="none" stroke="#fff" /><rect x="0.500" y="1.500" width="5" height="4" fill="#1b2a46" stroke="#fff" /><P d="M9.500 11.500v3M6 14.500h7M2.500 5.500v3" stroke="#fff" /></Svg>
        </button>
        <button aria-label="Volume muted" className="flex w-6 justify-center">
          <Svg><P d="M0.500 5.500h2.500l3.500-3.500v11L3 9.500H0.500z" fill="none" stroke="#fff" /><circle cx="11.500" cy="11.500" r="4.500" fill="#d93438" /><P d="M9.700 9.700l3.600 3.600M13.300 9.700l-3.600 3.600" stroke="#fff" strokeWidth="1.200" /></Svg>
        </button>
        <button className="flex w-16 flex-col items-center text-[11px] leading-[18px]"><span>9:12 AM</span><span>2/6/2021</span></button>
        <button aria-label="Notifications" className="flex w-10 justify-center">
          <Svg><P d="M0.500 1.500h15v11h-5L8 15.500l-2.500-3h-5z" fill="none" stroke="#fff" /></Svg>
        </button>
      </div>
      <span className="ml-2 h-10 w-[5px] border-l border-[#6d7789]" />
      <div className="pointer-events-none absolute right-6 bottom-0 flex items-start gap-2.5 text-white/50">
        <svg width="52" height="40" viewBox="0 0 52 40" aria-hidden="true">
          <P d="M14 0H48Q51 1 51 6V14L32 35Q30 38.500 26 38L4 31Q0 29 1 23Q1 18 4 14z" fill="#a9aebb" />
          <P d="M49 10L30 30Q28 33 25 32.500L6 27Q3 25 5 21L8 20 28 26z" fill="#1b2947" />
          <P d="M3 20l9-7 22 8-6 6z" fill="#a9aebb" />
          <P d="M22 3l15 3" stroke="#1b2947" strokeWidth="3" strokeLinecap="round" />
        </svg>
        <span className="font-['Open_Sans',sans-serif] text-[18px] leading-[30px]">The Collection Book</span>
      </div>
    </footer>
  );
}

export default function App() {
  return (
    <div className="relative flex min-h-screen flex-col overflow-hidden bg-white font-['Noto_Sans',sans-serif] text-[11px] leading-4">
      <ControlPanel />
      <AdminWindow />
      <IscsiDialog />
      <Taskbar />
    </div>
  );
}
